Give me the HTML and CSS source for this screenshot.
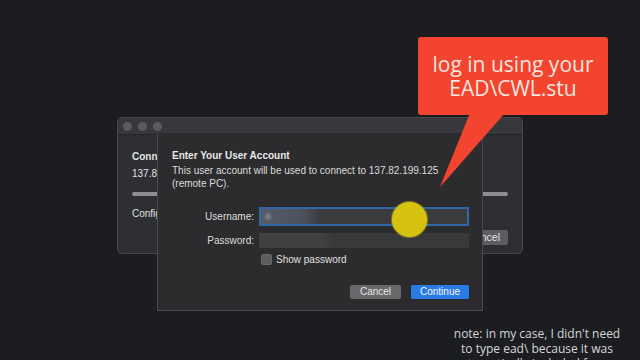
FILE: index.html
```html
<!DOCTYPE html>
<html>
<head>
<meta charset="utf-8">
<link rel="stylesheet" href="styles.css">
</head>
<body>
<div class="stage">
  <div class="back-window">
    <div class="titlebar">
      <span class="dot"></span><span class="dot"></span><span class="dot"></span>
    </div>
    <div class="back-content">
      <div class="back-title">Connecting</div>
      <div class="back-text">137.82.199.125</div>
      <div class="progress"></div>
      <div class="back-text">Configuring</div>
      <div class="back-actions"><span class="back-btn">Cancel</span></div>
    </div>
  </div>

  <div class="sheet">
    <div class="sheet-title">Enter Your User Account</div>
    <div class="sheet-desc">This user account will be used to connect to 137.82.199.125<br>(remote PC).</div>
    <div class="form">
      <label class="label">Username:</label>
      <div class="field field-focus"><span class="blur-dot"></span></div>
      <label class="label">Password:</label>
      <div class="field field-pass"></div>
      <div class="spacer"></div>
      <div class="check-row"><span class="checkbox"></span><span>Show password</span></div>
    </div>
    <div class="actions">
      <span class="btn btn-cancel">Cancel</span>
      <span class="btn btn-primary">Continue</span>
    </div>
  </div>

  <div class="cursor-dot"></div>

  <svg class="tail" width="640" height="360" viewBox="0 0 640 360"><polygon points="470,113 505,113 440,187" fill="#f2442f"/></svg>
  <div class="callout">log in using your<br>EAD\CWL.stu</div>

  <div class="note">note: in my case, I didn't need<br>to type ead\ because it was<br>automatically included for me</div>
</div>
</body>
</html>
```
FILE: styles.css
```css
html, body {
  margin: 0;
  padding: 0;
}
body {
  background: #1c1d21;
  font-family: "Liberation Sans", Arial, sans-serif;
}
.stage {
  position: relative;
  width: 640px;
  height: 360px;
  overflow: hidden;
  background: #1c1d21;
}
.back-window {
  position: absolute;
  left: 117px;
  top: 117px;
  width: 406px;
  height: 137px;
  box-sizing: border-box;
  background: #2e2f32;
  border: 1px solid #47484b;
  border-radius: 5px;
  overflow: hidden;
  display: flex;
  flex-direction: column;
}
.titlebar {
  height: 16px;
  flex: none;
  background: #37383b;
  border-bottom: 1px solid #222326;
  display: flex;
  align-items: center;
  gap: 6px;
  padding-left: 5px;
}
.dot {
  width: 9px;
  height: 9px;
  border-radius: 50%;
  background: #5a5b5e;
}
.back-content {
  padding: 15px 14px 0 14px;
  display: flex;
  flex-direction: column;
  color: #e2e2e2;
  font-size: 10px;
}
.back-title {
  font-weight: bold;
  line-height: 14px;
}
.back-text {
  line-height: 14px;
  margin-top: 3px;
}
.progress {
  height: 4px;
  border-radius: 2px;
  background: #8d8e91;
  margin: 11px 0 8px 0;
}
.back-actions {
  display: flex;
  justify-content: flex-end;
  margin-top: 9px;
}
.back-btn {
  background: #5c5d60;
  border-radius: 2px;
  padding: 1px 8px;
  line-height: 13px;
  color: #e6e6e6;
  font-size: 10.5px;
}
.sheet {
  position: absolute;
  left: 157px;
  top: 133px;
  width: 326px;
  height: 178px;
  box-sizing: border-box;
  background: #2c2b2d;
  border: 1px solid #4a494b;
  border-top: none;
  padding: 16px 13px 0 14px;
  color: #e4e4e4;
}
.sheet-title {
  font-weight: bold;
  font-size: 10px;
  line-height: 14px;
  color: #e8e8e8;
}
.sheet-desc {
  margin-top: 1px;
  font-size: 10px;
  line-height: 13px;
  color: #dcdcdc;
}
.form {
  margin-top: 17px;
  display: grid;
  grid-template-columns: 82px 210px;
  column-gap: 5px;
  row-gap: 7px;
  align-items: center;
  font-size: 10px;
}
.label {
  text-align: right;
  color: #dedede;
}
.field {
  position: relative;
  box-sizing: border-box;
  background: #3a393b;
}
.field-focus {
  height: 19px;
  border: 2px solid #2f68a3;
  background: linear-gradient(90deg, #555c68 0px, #4d535d 40px, #3b3a3d 60px, #3b3a3d 100%);
}
.blur-dot {
  position: absolute;
  left: 4px;
  top: 4px;
  width: 6px;
  height: 7px;
  border-radius: 50%;
  background: #777c86;
  filter: blur(1px);
}
.field-pass {
  height: 15px;
  background: linear-gradient(90deg, #403f42 0px, #403f42 65px, #39383a 75px, #39383a 100%);
}
.spacer {
  height: 0;
}
.check-row {
  display: flex;
  align-items: center;
  gap: 4px;
  margin-top: -1px;
  padding-left: 2px;
  color: #e0e0e0;
  font-size: 10px;
}
.checkbox {
  width: 11px;
  height: 11px;
  border-radius: 2px;
  background: #5d5c5f;
  border: 0.5px solid #6a696c;
  box-sizing: border-box;
}
.actions {
  display: flex;
  justify-content: flex-end;
  gap: 10px;
  margin-top: 20px;
}
.btn {
  height: 14px;
  line-height: 14px;
  border-radius: 2px;
  font-size: 10px;
  text-align: center;
}
.btn-cancel {
  width: 51px;
  background: #69696b;
  color: #e8e8e8;
}
.btn-primary {
  width: 58px;
  background: #2b7be6;
  color: #f2f6ff;
}
.cursor-dot {
  position: absolute;
  left: 392px;
  top: 202px;
  width: 35px;
  height: 35px;
  border-radius: 50%;
  background: #d6c30f;
  box-shadow: 0 0 1px 1px rgba(214, 195, 15, 0.5);
}
.tail {
  position: absolute;
  left: 0;
  top: 0;
}
.callout {
  position: absolute;
  left: 418px;
  top: 37px;
  width: 190px;
  height: 78px;
  box-sizing: border-box;
  padding-top: 15px;
  background: #f2442f;
  border-radius: 3px;
  color: #f8e4df;
  font-family: "Open Sans", "Noto Sans", sans-serif;
  font-size: 21px;
  line-height: 24px;
  text-align: center;
}
.note {
  position: absolute;
  left: 430px;
  top: 326px;
  width: 214px;
  color: #d6d6d6;
  font-family: "Open Sans", "Noto Sans", sans-serif;
  font-size: 12px;
  line-height: 15px;
  text-align: center;
}
```
